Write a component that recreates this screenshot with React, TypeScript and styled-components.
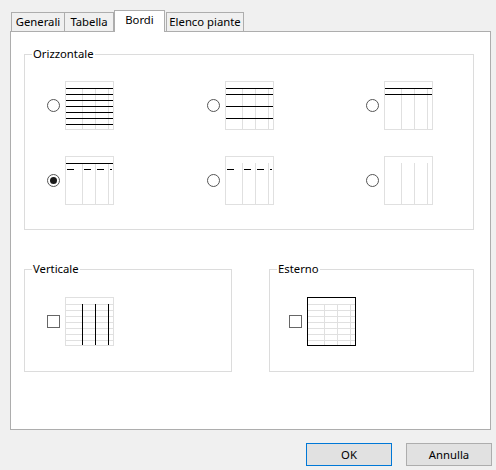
import React from "react";
import styled, { createGlobalStyle } from "styled-components";

const GlobalStyle = createGlobalStyle`
  html, body {
    margin: 0;
    padding: 0;
    background: #f0f0f0;
  }
  body {
    font-family: "Noto Sans", "Segoe UI", sans-serif;
    font-size: 11.3px;
    color: #000;
  }
`;

const Window = styled.div`
  width: 496px;
  height: 470px;
  box-sizing: border-box;
  padding: 10px 0 0 10px;
  display: flex;
  flex-direction: column;
`;

const TabRow = styled.div`
  height: 21px;
  display: flex;
  align-items: flex-end;
  padding-left: 1px;
`;

const Tab = styled.div<{ $active?: boolean; $w: number; $ml?: number }>`
  box-sizing: border-box;
  width: ${(p) => p.$w}px;
  height: ${(p) => (p.$active ? 22 : 19)}px;
  margin-left: ${(p) => p.$ml ?? 0}px;
  margin-bottom: ${(p) => (p.$active ? -1 : 0)}px;
  border: 1px solid #adadad;
  border-bottom: none;
  background: ${(p) => (p.$active ? "#fff" : "#f0f0f0")};
  position: relative;
  z-index: ${(p) => (p.$active ? 1 : 0)};
  display: flex;
  justify-content: center;
  align-items: ${(p) => (p.$active ? "flex-start" : "center")};
  padding-top: ${(p) => (p.$active ? 1 : 0)}px;
  line-height: 16px;
  white-space: nowrap;
`;

const Panel = styled.div`
  width: 481px;
  height: 399px;
  box-sizing: border-box;
  border: 1px solid #adadad;
  background: #fff;
  padding: 0 0 0 13px;
`;

const Group = styled.fieldset<{ $w: number; $h: number; $mt: number }>`
  box-sizing: border-box;
  width: ${(p) => p.$w}px;
  height: ${(p) => p.$h}px;
  margin: ${(p) => p.$mt}px 0 0 0;
  padding: 0;
  border: 1px solid #dcdcdc;
  min-width: 0;
`;

const Legend = styled.legend`
  margin-left: 7px;
  padding: 0 1px;
  line-height: 14px;
`;

const RadioGrid = styled.div`
  display: grid;
  grid-template-columns: 160px 159px auto;
  row-gap: 26px;
  padding: 20px 0 0 22px;
`;

const Option = styled.label`
  display: flex;
  align-items: center;
  gap: 5px;
`;

const Radio = styled.span<{ $checked?: boolean }>`
  box-sizing: border-box;
  width: 13px;
  height: 13px;
  border-radius: 50%;
  border: 1px solid #555;
  display: flex;
  align-items: center;
  justify-content: center;
  &::after {
    content: "";
    width: 7px;
    height: 7px;
    border-radius: 50%;
    background: ${(p) => (p.$checked ? "#1a1a1a" : "transparent")};
  }
`;

const Check = styled.span`
  box-sizing: border-box;
  width: 13px;
  height: 13px;
  border: 1px solid #666;
`;

const BottomRow = styled.div`
  display: flex;
  gap: 37px;
`;

const GroupBody = styled.div<{ $pl: number }>`
  padding: 21px 0 0 ${(p) => p.$pl}px;
`;

const Buttons = styled.div`
  display: flex;
  justify-content: flex-end;
  gap: 14px;
  margin-top: 13px;
  padding-right: 4px;
`;

const Button = styled.button<{ $default?: boolean }>`
  box-sizing: border-box;
  width: 86px;
  height: 23px;
  background: #e1e1e1;
  border: 1px solid ${(p) => (p.$default ? "#0078d7" : "#adadad")};
  font: inherit;
  color: #000;
  padding: 0;
`;

const COLS = [17, 30, 43];
const ROWS = [7, 13, 19, 25, 31, 37, 43];
const LIGHT = "#e0e0e0";

function dashes(y: number) {
  const starts = [0, 17, 30, 43];
  return starts.map((c) => (
    <line key={c} x1={c + 2} y1={y + 0.5} x2={Math.min(c + 9, 47)} y2={y + 0.5} stroke="#000" />
  ));
}

function TableIcon({
  full = [],
  dashed = [],
  lightRows = false,
  blackCols = false,
  frame = false,
}: {
  full?: number[];
  dashed?: number[];
  lightRows?: boolean;
  blackCols?: boolean;
  frame?: boolean;
}) {
  return (
    <svg width="49" height="49" viewBox="0 0 49 49" shapeRendering="crispEdges">
      <rect x="0.5" y="0.5" width="48" height="48" fill="#fff" stroke={LIGHT} />
      {lightRows &&
        ROWS.map((y) => <line key={"r" + y} x1="1" y1={y + 0.5} x2="48" y2={y + 0.5} stroke={LIGHT} />)}
      {COLS.map((x) => (
        <line key={"c" + x} x1={x + 0.5} y1="7" x2={x + 0.5} y2="48" stroke={blackCols ? "#000" : LIGHT} />
      ))}
      {full.map((y) => (
        <line key={"f" + y} x1="1" y1={y + 0.5} x2="48" y2={y + 0.5} stroke="#000" />
      ))}
      {dashed.map((y) => dashes(y))}
      {frame && <rect x="0.5" y="0.5" width="48" height="48" fill="none" stroke="#000" />}
    </svg>
  );
}

const horizontal = [
  { full: ROWS, dashed: [] },
  { full: [7, 13, 25, 37], dashed: [] },
  { full: [7, 13], dashed: [] },
  { full: [7], dashed: [13], checked: true },
  { full: [], dashed: [13] },
  { full: [], dashed: [] },
];

export default function App() {
  return (
    <>
      <GlobalStyle />
      <Window>
        <TabRow>
          <Tab $w={54}>Generali</Tab>
          <Tab $w={50} $ml={-1}>Tabella</Tab>
          <Tab $w={51} $active>Bordi</Tab>
          <Tab $w={78} $ml={1}>Elenco piante</Tab>
        </TabRow>
        <Panel>
          <Group $w={450} $h={183} $mt={15}>
            <Legend>Orizzontale</Legend>
            <RadioGrid>
              {horizontal.map((h, i) => (
                <Option key={i}>
                  <Radio $checked={h.checked} />
                  <TableIcon full={h.full} dashed={h.dashed} />
                </Option>
              ))}
            </RadioGrid>
          </Group>
          <BottomRow>
            <Group $w={208} $h={110} $mt={32}>
              <Legend>Verticale</Legend>
              <GroupBody $pl={22}>
                <Option>
                  <Check />
                  <TableIcon lightRows blackCols />
                </Option>
              </GroupBody>
            </Group>
            <Group $w={205} $h={110} $mt={32}>
              <Legend>Esterno</Legend>
              <GroupBody $pl={19}>
                <Option>
                  <Check />
                  <TableIcon lightRows frame />
                </Option>
              </GroupBody>
            </Group>
          </BottomRow>
        </Panel>
        <Buttons>
          <Button $default>OK</Button>
          <Button>Annulla</Button>
        </Buttons>
      </Window>
    </>
  );
}
